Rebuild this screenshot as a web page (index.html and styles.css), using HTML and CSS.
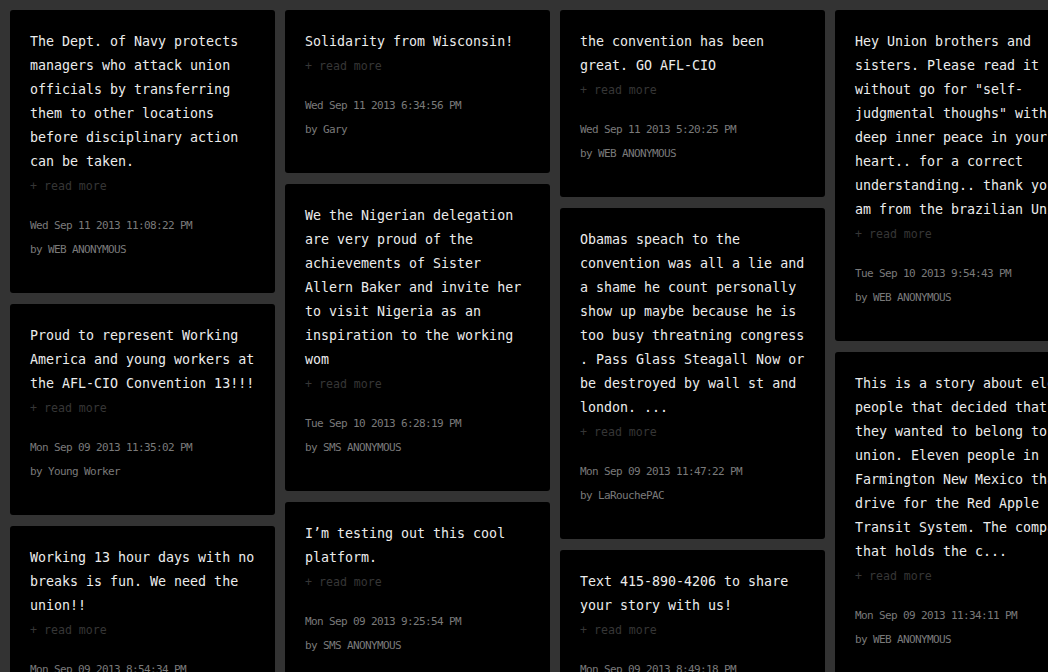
FILE: index.html
```html
<!DOCTYPE html>
<html>
<head>
<meta charset="utf-8">
<link rel="stylesheet" href="styles.css">
</head>
<body>
<div class="wall">
  <div class="col">
    <div class="card">
      <p class="body">The Dept. of Navy protects managers who attack union officials by transferring them to other locations before disciplinary action can be taken.</p>
      <a class="more">+ read more</a>
      <div class="meta"><div>Wed Sep 11 2013 11:08:22 PM</div><div>by WEB ANONYMOUS</div></div>
    </div>
    <div class="card">
      <p class="body">Proud to represent Working America and young workers at the AFL-CIO Convention 13!!!</p>
      <a class="more">+ read more</a>
      <div class="meta"><div>Mon Sep 09 2013 11:35:02 PM</div><div>by Young Worker</div></div>
    </div>
    <div class="card">
      <p class="body">Working 13 hour days with no breaks is fun. We need the union!!</p>
      <a class="more">+ read more</a>
      <div class="meta"><div>Mon Sep 09 2013 8:54:34 PM</div><div>by WEB ANONYMOUS</div></div>
    </div>
  </div>
  <div class="col">
    <div class="card">
      <p class="body">Solidarity from Wisconsin!</p>
      <a class="more">+ read more</a>
      <div class="meta"><div>Wed Sep 11 2013 6:34:56 PM</div><div>by Gary</div></div>
    </div>
    <div class="card">
      <p class="body">We the Nigerian delegation are very proud of the achievements of Sister Allern Baker and invite her to visit Nigeria as an inspiration to the working wom</p>
      <a class="more">+ read more</a>
      <div class="meta"><div>Tue Sep 10 2013 6:28:19 PM</div><div>by SMS ANONYMOUS</div></div>
    </div>
    <div class="card">
      <p class="body">I’m testing out this cool platform.</p>
      <a class="more">+ read more</a>
      <div class="meta"><div>Mon Sep 09 2013 9:25:54 PM</div><div>by SMS ANONYMOUS</div></div>
    </div>
  </div>
  <div class="col">
    <div class="card">
      <p class="body">the convention has been great. GO AFL-CIO</p>
      <a class="more">+ read more</a>
      <div class="meta"><div>Wed Sep 11 2013 5:20:25 PM</div><div>by WEB ANONYMOUS</div></div>
    </div>
    <div class="card">
      <p class="body">Obamas speach to the convention was all a lie and a shame he count personally show up maybe because he is too busy threatning congress . Pass Glass Steagall Now or be destroyed by wall st and london. ...</p>
      <a class="more">+ read more</a>
      <div class="meta"><div>Mon Sep 09 2013 11:47:22 PM</div><div>by LaRouchePAC</div></div>
    </div>
    <div class="card">
      <p class="body">Text 415-890-4206 to share your story with us!</p>
      <a class="more">+ read more</a>
      <div class="meta"><div>Mon Sep 09 2013 8:49:18 PM</div><div>by WEB ANONYMOUS</div></div>
    </div>
  </div>
  <div class="col">
    <div class="card">
      <p class="body">Hey Union brothers and sisters. Please read it without go for "self-judgmental thoughs" with deep inner peace in your heart.. for a correct understanding.. thank you I am from the brazilian Union.</p>
      <a class="more">+ read more</a>
      <div class="meta"><div>Tue Sep 10 2013 9:54:43 PM</div><div>by WEB ANONYMOUS</div></div>
    </div>
    <div class="card">
      <p class="body">This is a story about eleven people that decided that they wanted to belong to a union. Eleven people in Farmington New Mexico that drive for the Red Apple Transit System. The company that holds the c...</p>
      <a class="more">+ read more</a>
      <div class="meta"><div>Mon Sep 09 2013 11:34:11 PM</div><div>by WEB ANONYMOUS</div></div>
    </div>
  </div>
</div>
</body>
</html>
```
FILE: styles.css
```css
html, body {
  margin: 0;
  padding: 0;
  background: #333333;
  overflow: hidden;
  height: 672px;
}
.wall {
  display: flex;
  gap: 10px;
  padding: 10px;
  width: 1200px;
  align-items: flex-start;
}
.col {
  width: 265px;
  flex-shrink: 0;
  display: flex;
  flex-direction: column;
  gap: 11px;
}
.card {
  background: #000;
  border-radius: 3px;
  padding: 20px 20px 31px;
  font-family: "DejaVu Sans Mono", monospace;
}
.body {
  margin: 0;
  font-size: 13.3px;
  line-height: 24px;
  color: #ececec;
}
.more {
  display: block;
  font-size: 11.6px;
  line-height: 24px;
  color: #363636;
}
.meta {
  margin-top: 16px;
  font-size: 11px;
  letter-spacing: -0.62px;
  line-height: 24px;
  color: #7a7a7a;
}
```
